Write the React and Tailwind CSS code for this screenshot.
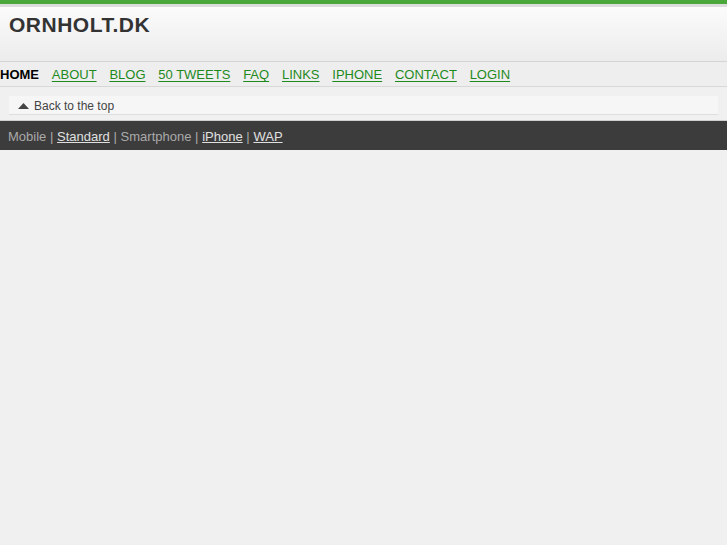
import React from "react";

const links = ["ABOUT", "BLOG", "50 TWEETS", "FAQ", "LINKS", "IPHONE", "CONTACT", "LOGIN"];

export default function App() {
  return (
    <div className="min-h-[545px] w-full bg-[#f0f0f0] font-['Liberation_Sans',Arial,sans-serif]">
      <div className="h-[4px] bg-[#4aa83a]"></div>
      <div className="h-[3px] bg-[#dcdcdc]"></div>
      <div className="h-[55px] border-b border-[#d4d4d4] bg-gradient-to-b from-[#fbfbfb] to-[#ececec] px-[9px] pt-[5px]">
        <h1 className="text-[21px] font-bold leading-[26px] tracking-[0.5px] text-[#333333]">ORNHOLT.DK</h1>
      </div>
      <div className="flex h-[25px] items-center gap-[12.8px] border-b border-[#d8d8d8] bg-[#eeeeee] pt-[2px] text-[13px]">
        <span className="font-bold text-black">HOME</span>
        {links.map((l) => (
          <a key={l} href="#" className="text-[#1e8a1e] underline underline-offset-[2px]">
            {l}
          </a>
        ))}
      </div>
      <div className="px-[9px] pt-[9px] pb-[5px]">
        <div className="flex h-[19px] items-center gap-[5px] border-b border-[#dedede] bg-[#f6f6f6] pl-[9px] pt-[1px] text-[12px] text-[#444444]">
          <svg width="11" height="6" viewBox="0 0 11 6">
            <polygon points="0,6 5.5,0 11,6" fill="#444444" />
          </svg>
          <span>Back to the top</span>
        </div>
      </div>
      <div className="h-[1px] bg-[#d0d0d0]"></div>
      <div className="flex h-[29px] items-center bg-[#3c3c3c] px-[8px] pt-[2px] text-[13px] text-[#aaaaaa]">
        <span>Mobile</span>
        <span className="px-[3.7px]">|</span>
        <a href="#" className="text-[#e0e0e0] underline">Standard</a>
        <span className="px-[3.7px]">|</span>
        <span>Smartphone</span>
        <span className="px-[3.7px]">|</span>
        <a href="#" className="text-[#e0e0e0] underline">iPhone</a>
        <span className="px-[3.7px]">|</span>
        <a href="#" className="text-[#e0e0e0] underline">WAP</a>
      </div>
    </div>
  );
}
